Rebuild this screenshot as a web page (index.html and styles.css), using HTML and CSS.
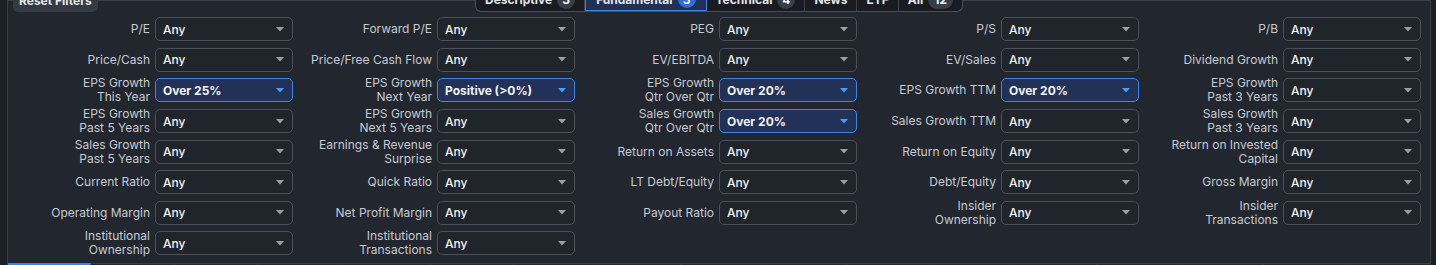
FILE: index.html
```html
<!DOCTYPE html>
<html lang="en">
<head>
<meta charset="utf-8">
<title>Screener Filters</title>
<link rel="stylesheet" href="styles.css">
</head>
<body>
<div class="panel">
  <div class="toolbar">
    <div class="toolbar-left"><button class="reset-btn">Reset Filters</button></div>
    <div class="tabs">
      <div class="tab">Descriptive <span class="badge">3</span></div>
      <div class="tab tab-active">Fundamental <span class="badge badge-active">3</span></div>
      <div class="tab">Technical <span class="badge">4</span></div>
      <div class="tab">News</div>
      <div class="tab">ETF</div>
      <div class="tab">All <span class="badge badge-wide">12</span></div>
    </div>
    <div></div>
  </div>

  <div class="grid">
    <div class="field"><span class="label">P/E</span><div class="select"><span>Any</span><svg class="caret" viewBox="0 0 8 5"><path d="M0 0H8L4 4.6Z"/></svg></div></div>
    <div class="field"><span class="label">Forward P/E</span><div class="select"><span>Any</span><svg class="caret" viewBox="0 0 8 5"><path d="M0 0H8L4 4.6Z"/></svg></div></div>
    <div class="field"><span class="label">PEG</span><div class="select"><span>Any</span><svg class="caret" viewBox="0 0 8 5"><path d="M0 0H8L4 4.6Z"/></svg></div></div>
    <div class="field"><span class="label">P/S</span><div class="select"><span>Any</span><svg class="caret" viewBox="0 0 8 5"><path d="M0 0H8L4 4.6Z"/></svg></div></div>
    <div class="field"><span class="label">P/B</span><div class="select"><span>Any</span><svg class="caret" viewBox="0 0 8 5"><path d="M0 0H8L4 4.6Z"/></svg></div></div>

    <div class="field"><span class="label">Price/Cash</span><div class="select"><span>Any</span><svg class="caret" viewBox="0 0 8 5"><path d="M0 0H8L4 4.6Z"/></svg></div></div>
    <div class="field"><span class="label">Price/Free Cash Flow</span><div class="select"><span>Any</span><svg class="caret" viewBox="0 0 8 5"><path d="M0 0H8L4 4.6Z"/></svg></div></div>
    <div class="field"><span class="label">EV/EBITDA</span><div class="select"><span>Any</span><svg class="caret" viewBox="0 0 8 5"><path d="M0 0H8L4 4.6Z"/></svg></div></div>
    <div class="field"><span class="label">EV/Sales</span><div class="select"><span>Any</span><svg class="caret" viewBox="0 0 8 5"><path d="M0 0H8L4 4.6Z"/></svg></div></div>
    <div class="field"><span class="label">Dividend Growth</span><div class="select"><span>Any</span><svg class="caret" viewBox="0 0 8 5"><path d="M0 0H8L4 4.6Z"/></svg></div></div>

    <div class="field"><span class="label">EPS Growth<br>This Year</span><div class="select select-active"><span>Over 25%</span><svg class="caret" viewBox="0 0 8 5"><path d="M0 0H8L4 4.6Z"/></svg></div></div>
    <div class="field"><span class="label">EPS Growth<br>Next Year</span><div class="select select-active"><span>Positive (&gt;0%)</span><svg class="caret" viewBox="0 0 8 5"><path d="M0 0H8L4 4.6Z"/></svg></div></div>
    <div class="field"><span class="label">EPS Growth<br>Qtr Over Qtr</span><div class="select select-active"><span>Over 20%</span><svg class="caret" viewBox="0 0 8 5"><path d="M0 0H8L4 4.6Z"/></svg></div></div>
    <div class="field"><span class="label">EPS Growth TTM</span><div class="select select-active"><span>Over 20%</span><svg class="caret" viewBox="0 0 8 5"><path d="M0 0H8L4 4.6Z"/></svg></div></div>
    <div class="field"><span class="label">EPS Growth<br>Past 3 Years</span><div class="select"><span>Any</span><svg class="caret" viewBox="0 0 8 5"><path d="M0 0H8L4 4.6Z"/></svg></div></div>

    <div class="field"><span class="label">EPS Growth<br>Past 5 Years</span><div class="select"><span>Any</span><svg class="caret" viewBox="0 0 8 5"><path d="M0 0H8L4 4.6Z"/></svg></div></div>
    <div class="field"><span class="label">EPS Growth<br>Next 5 Years</span><div class="select"><span>Any</span><svg class="caret" viewBox="0 0 8 5"><path d="M0 0H8L4 4.6Z"/></svg></div></div>
    <div class="field"><span class="label">Sales Growth<br>Qtr Over Qtr</span><div class="select select-active"><span>Over 20%</span><svg class="caret" viewBox="0 0 8 5"><path d="M0 0H8L4 4.6Z"/></svg></div></div>
    <div class="field"><span class="label">Sales Growth TTM</span><div class="select"><span>Any</span><svg class="caret" viewBox="0 0 8 5"><path d="M0 0H8L4 4.6Z"/></svg></div></div>
    <div class="field"><span class="label">Sales Growth<br>Past 3 Years</span><div class="select"><span>Any</span><svg class="caret" viewBox="0 0 8 5"><path d="M0 0H8L4 4.6Z"/></svg></div></div>

    <div class="field"><span class="label">Sales Growth<br>Past 5 Years</span><div class="select"><span>Any</span><svg class="caret" viewBox="0 0 8 5"><path d="M0 0H8L4 4.6Z"/></svg></div></div>
    <div class="field"><span class="label">Earnings &amp; Revenue<br>Surprise</span><div class="select"><span>Any</span><svg class="caret" viewBox="0 0 8 5"><path d="M0 0H8L4 4.6Z"/></svg></div></div>
    <div class="field"><span class="label">Return on Assets</span><div class="select"><span>Any</span><svg class="caret" viewBox="0 0 8 5"><path d="M0 0H8L4 4.6Z"/></svg></div></div>
    <div class="field"><span class="label">Return on Equity</span><div class="select"><span>Any</span><svg class="caret" viewBox="0 0 8 5"><path d="M0 0H8L4 4.6Z"/></svg></div></div>
    <div class="field"><span class="label">Return on Invested<br>Capital</span><div class="select"><span>Any</span><svg class="caret" viewBox="0 0 8 5"><path d="M0 0H8L4 4.6Z"/></svg></div></div>

    <div class="field"><span class="label">Current Ratio</span><div class="select"><span>Any</span><svg class="caret" viewBox="0 0 8 5"><path d="M0 0H8L4 4.6Z"/></svg></div></div>
    <div class="field"><span class="label">Quick Ratio</span><div class="select"><span>Any</span><svg class="caret" viewBox="0 0 8 5"><path d="M0 0H8L4 4.6Z"/></svg></div></div>
    <div class="field"><span class="label">LT Debt/Equity</span><div class="select"><span>Any</span><svg class="caret" viewBox="0 0 8 5"><path d="M0 0H8L4 4.6Z"/></svg></div></div>
    <div class="field"><span class="label">Debt/Equity</span><div class="select"><span>Any</span><svg class="caret" viewBox="0 0 8 5"><path d="M0 0H8L4 4.6Z"/></svg></div></div>
    <div class="field"><span class="label">Gross Margin</span><div class="select"><span>Any</span><svg class="caret" viewBox="0 0 8 5"><path d="M0 0H8L4 4.6Z"/></svg></div></div>

    <div class="field"><span class="label">Operating Margin</span><div class="select"><span>Any</span><svg class="caret" viewBox="0 0 8 5"><path d="M0 0H8L4 4.6Z"/></svg></div></div>
    <div class="field"><span class="label">Net Profit Margin</span><div class="select"><span>Any</span><svg class="caret" viewBox="0 0 8 5"><path d="M0 0H8L4 4.6Z"/></svg></div></div>
    <div class="field"><span class="label">Payout Ratio</span><div class="select"><span>Any</span><svg class="caret" viewBox="0 0 8 5"><path d="M0 0H8L4 4.6Z"/></svg></div></div>
    <div class="field"><span class="label">Insider<br>Ownership</span><div class="select"><span>Any</span><svg class="caret" viewBox="0 0 8 5"><path d="M0 0H8L4 4.6Z"/></svg></div></div>
    <div class="field"><span class="label">Insider<br>Transactions</span><div class="select"><span>Any</span><svg class="caret" viewBox="0 0 8 5"><path d="M0 0H8L4 4.6Z"/></svg></div></div>

    <div class="field"><span class="label">Institutional<br>Ownership</span><div class="select"><span>Any</span><svg class="caret" viewBox="0 0 8 5"><path d="M0 0H8L4 4.6Z"/></svg></div></div>
    <div class="field"><span class="label">Institutional<br>Transactions</span><div class="select"><span>Any</span><svg class="caret" viewBox="0 0 8 5"><path d="M0 0H8L4 4.6Z"/></svg></div></div>
  </div>

  <div class="subtabs">
    <div class="subtab subtab-active"></div>
    <div class="subtab"></div>
    <div class="subtab"></div>
    <div class="subtab"></div>
    <div class="subtab subtab-wide"></div>
    <div class="subtab"></div>
    <div class="subtab"></div>
    <div class="subtab"></div>
    <div class="subtab"></div>
    <div class="subtab"></div>
    <div class="subtab"></div>
    <div class="subtab"></div>
    <div class="subtab"></div>
    <div class="subtab"></div>
    <div class="subtab"></div>
    <div class="subtab"></div>
    <div class="subtab"></div>
  </div>
</div>
</body>
</html>
```

FILE: styles.css
```css
* { box-sizing: border-box; }

html, body {
  margin: 0;
  padding: 0;
  background: #1c1f26;
  font-family: Inter, "Noto Sans", sans-serif;
  font-size: 12px;
  color: #c7cbd3;
  overflow: hidden;
}

.panel {
  margin: 0 5px 0 7px;
  background: #22262e;
  border-left: 1px solid #3a3e48;
  border-right: 1px solid #3a3e48;
  border-top: 1px solid #3a3e48;
  height: 300px;
}

.toolbar {
  display: grid;
  grid-template-columns: 1fr auto 1fr;
  margin-top: -13px;
  height: 24px;
  position: relative;
}

.toolbar-left {
  padding-left: 5px;
}

.reset-btn {
  height: 24px;
  padding: 0 6px;
  border: 0;
  border-radius: 0 0 5px 5px;
  background: #363a45;
  color: #e6e8ec;
  font-family: Inter, "Noto Sans", sans-serif;
  font-weight: 700;
  font-size: 12px;
  white-space: nowrap;
}

.tabs {
  display: flex;
  height: 24px;
  border: 1px solid #4a4e59;
  border-top: 0;
  border-radius: 0 0 6px 6px;
  background: #191b21;
  overflow: hidden;
}

.tab {
  display: flex;
  align-items: center;
  gap: 5px;
  padding: 0 9px;
  font-weight: 700;
  font-size: 12px;
  color: #e4e6ea;
  border-right: 1px solid #3c404a;
  white-space: nowrap;
}

.tab:last-child { border-right: 0; }

.tab-active {
  background: #1f3157;
  border: 1px solid #3d82e4;
  border-top: 0;
  padding: 0 10px;
}

.badge {
  display: inline-flex;
  align-items: center;
  justify-content: center;
  min-width: 18px;
  height: 18px;
  border-radius: 9px;
  background: #393d47;
  color: #f0f1f3;
  font-size: 12px;
  font-weight: 700;
}

.badge-active { background: #2e6fd8; }
.badge-wide { padding: 0 6px; }

.grid {
  display: grid;
  grid-template-columns: repeat(5, 282px);
  grid-auto-rows: 30.6px;
  margin-top: 2px;
  padding-left: 3px;
}

.field {
  display: flex;
  align-items: center;
  justify-content: flex-end;
  gap: 5px;
}

.label {
  text-align: right;
  line-height: 14px;
  color: #c6cad2;
}

.select {
  width: 138px;
  height: 24px;
  flex: none;
  display: flex;
  align-items: center;
  justify-content: space-between;
  padding: 0 8px 0 7px;
  border: 1px solid #4c505a;
  border-radius: 5px;
  background: #20242b;
  color: #f2f3f5;
  font-weight: 500;
}

.caret {
  width: 8px;
  height: 5px;
  fill: #9a9fa9;
}

.select-active {
  background: #223158;
  border-color: #3d84e6;
  font-weight: 700;
}

.select-active .caret { fill: #4a9cf6; }

.subtabs {
  display: flex;
  margin-top: 4px;
  border-top: 1px solid #3a3e48;
  height: 30px;
}

.subtab {
  flex: 1 1 0;
  border-right: 1px solid #3a3e48;
}

.subtab:last-child { border-right: 0; }

.subtab-wide { flex-grow: 1.07; }

.subtab-active {
  border-top: 2px solid #3d84e6;
  margin-top: -1px;
}
```
